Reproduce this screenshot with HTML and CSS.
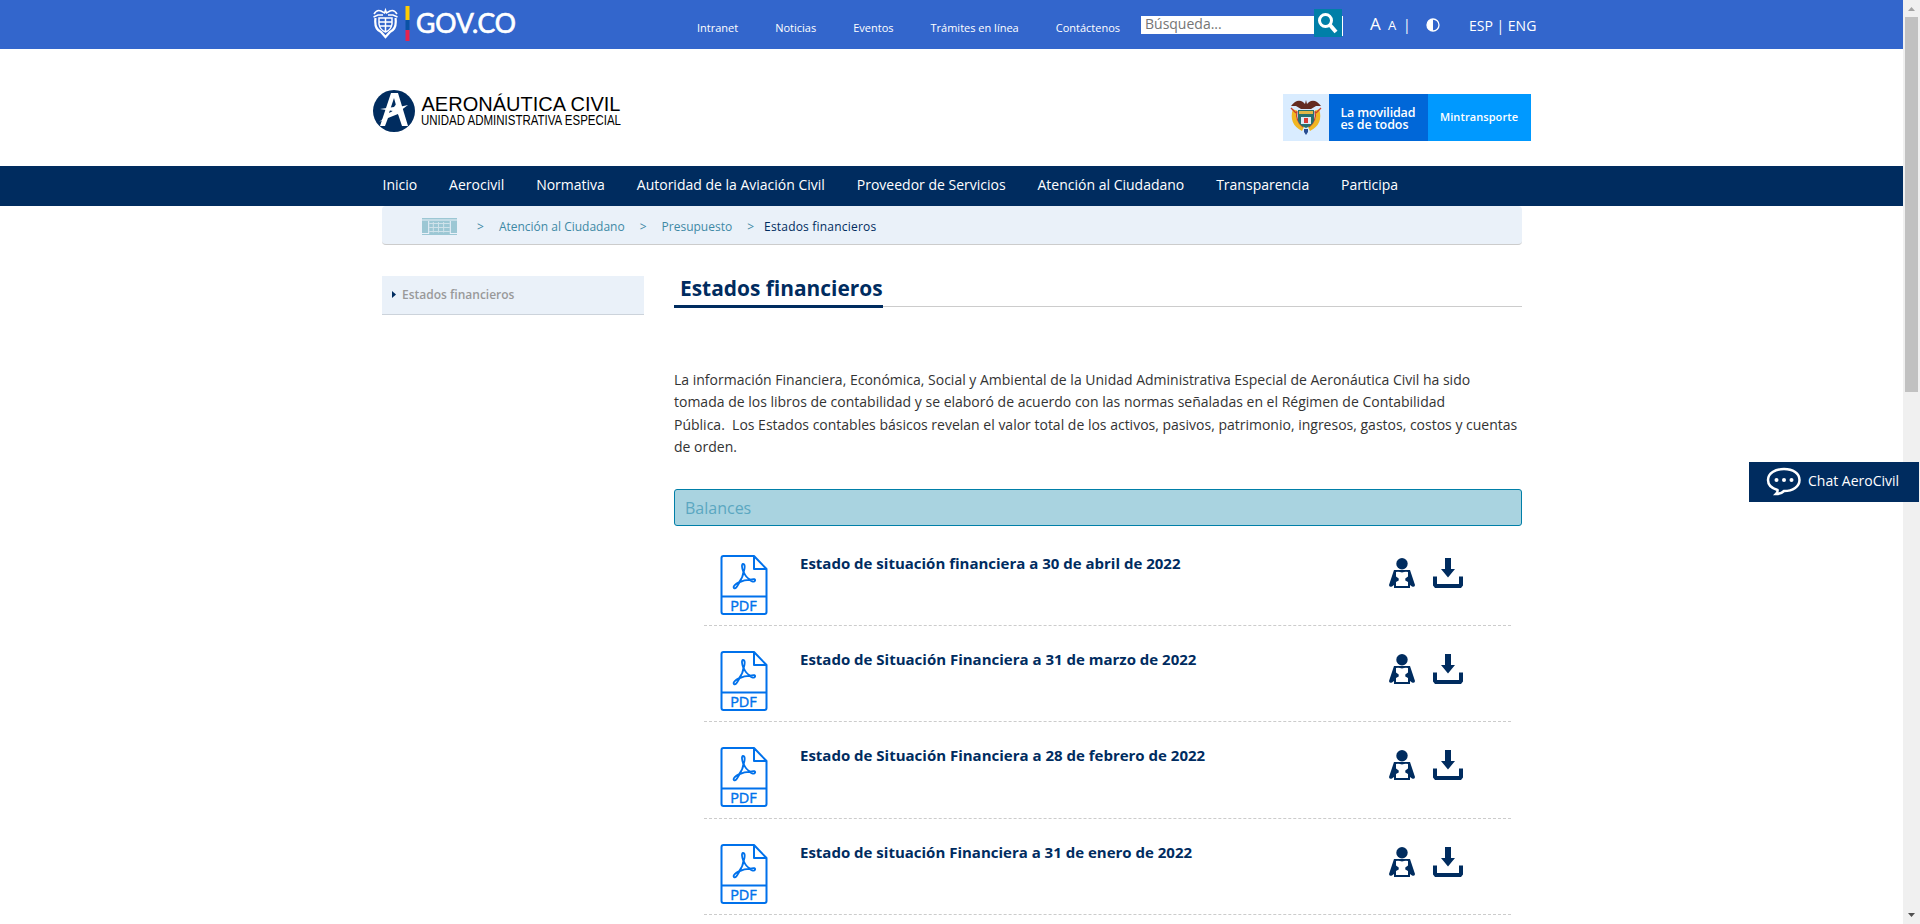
FILE: index.html
```html
<!DOCTYPE html>
<html lang="es">
<head>
<meta charset="utf-8">
<title>Estados financieros</title>
<link rel="stylesheet" href="styles.css">
</head>
<body>
<svg class="sprite" aria-hidden="true">
  <symbol id="pdf" viewBox="0 0 48 60">
    <g fill="none" stroke="#0071eb" stroke-width="2" stroke-linejoin="round">
      <path d="M3.500 1H34L46.500 14V57Q46.500 59 44.500 59H3.500Q1.500 59 1.500 57V3Q1.500 1 3.500 1ZM34 1V14H46.500M1.500 41.500H46.500"/>
      <path stroke-width="1.800" d="M23 9c2.500 0 1.800 4.500 0.700 8c1.500 3.800 4 6.500 6.500 7.600c4-1.200 5.500-.3 4.800 1.200c-1 1.800-3 .6-5.300-.9c-3.500 0-7.500 1-10 2.200c-2.500 4.400-4 7-5.700 6c-1.500-1.500 1.700-4.300 5.200-6c2.700-3.600 4-6.900 4.200-10c-1.600-4-2-8.100-.4-8.100Z"/>
    </g>
    <text x="23.500" y="55.500" text-anchor="middle" fill="#0071eb" stroke="#0071eb" stroke-width=".4" font-size="14.500" font-family="Open Sans, sans-serif">PDF</text>
  </symbol>
  <symbol id="reader" viewBox="0 0 26 30">
    <circle cx="13" cy="5.700" r="5.700"/>
    <path fill-rule="evenodd" d="M5 12H21L26 27Q26 29.500 23 28.500L21 27V30H5V27L3 28.500Q0 29.500 0 27ZM7 14V18.500L9.700 20.500V22.500L7 24V28H19V24L16.300 22.500V20.500L19 18.500V14Q16 13.500 13 14.500Q10 13.500 7 14Z"/>
  </symbol>
  <symbol id="download" viewBox="0 0 30 30">
    <path d="M12 0H18V11H22L15 19.500L8 11H12ZM0 18.500H4V26H26V18.500H30V27.500L28 30H2L0 27.500Z"/>
  </symbol>
</svg>
<div class="page">
<div class="topbar">
  <svg class="gov" width="144" height="36" viewBox="0 0 144 36">
    <g fill="none" stroke="#fff" stroke-width="1.500">
      <path d="M1 8Q4 3 8 5L11.500 7L12.500 4L13.500 7L17 5Q21 3 24 8M0.500 11L5 9L10 9M24.500 11L20 9L15 9"/>
      <path d="M6 12H19V18Q18 24 12.500 26Q7 24 6 18ZM6 16H19M7 20H18M12.500 12V26"/>
      <path d="M2.500 12Q1 23 8 26L12.500 31L17 26Q24 23 22.500 12" stroke-width="2.200"/>
    </g>
    <path fill="#ffcd00" d="M32.500 0h4v14h-4z"/><path fill="#0a52a5" d="M32.500 14h4v10h-4z"/><path fill="#e6224d" d="M32.500 24h4v11h-4z"/>
    <text x="43" y="27" textLength="100" lengthAdjust="spacingAndGlyphs" fill="#fff" stroke="#fff" stroke-width=".7" font-family="Lato" font-size="26">GOV.CO</text>
  </svg>
  <nav class="toplinks"><a>Intranet</a><a>Noticias</a><a>Eventos</a><a>Trámites en línea</a><a>Contáctenos</a></nav>
  <div class="search"><div class="field">Búsqueda...</div><div class="glass"><svg width="28" height="28" viewBox="0 0 28 28" fill="none" stroke="#fff"><circle cx="11.500" cy="11.500" r="6" stroke-width="3"/><path d="M16 16L22 23" stroke-width="4"/></svg></div><i></i></div>
  <div class="sizes"><span class="big">A</span><span class="small">A</span><span class="bar">|</span></div>
  <svg class="contrast" width="14" height="14" viewBox="0 0 14 14"><circle cx="7" cy="7" r="6" fill="none" stroke="#fff" stroke-width="1.300"/><path fill="#fff" d="M7 1A6 6 0 0 0 7 13Z"/></svg>
  <div class="langs">ESP | ENG</div>
</div>
<header class="brand">
  <svg width="260" height="60" viewBox="0 0 260 60">
    <circle cx="21" cy="31" r="21" fill="#002c5f"/>
    <path fill="#fff" d="M18 13H25L35 46H29L25 34L15 38L12 46H7ZM21 18L16 33L24 29Z"/>
    <path fill="#fff" d="M7 29L21 27L24 23L26 27L35 25L27 31L28 36L23 33L6 42L20 31Z"/>
    <text x="48.500" y="31" textLength="199" lengthAdjust="spacingAndGlyphs" font-family="Liberation Sans" font-size="20.500">AERONÁUTICA CIVIL</text>
    <text x="48" y="45" textLength="200" lengthAdjust="spacingAndGlyphs" font-family="Liberation Sans" font-size="14">UNIDAD ADMINISTRATIVA ESPECIAL</text>
  </svg>
  <svg class="ministry" width="248" height="47" viewBox="0 0 248 47">
    <path fill="#d9ecff" d="M0 0h46v47H0z"/><path fill="#0067d8" d="M46 0h100v47H46z"/><path fill="#0099ff" d="M145 0h103v47H145z"/>
    <path fill="none" stroke="#f0b622" stroke-width="4.500" d="M12 16Q8 29 20 35M34 16Q38 29 26 35"/>
    <path fill="#642b20" d="M8 12Q14 4 20 8L22 10L23 6L24 10L26 8Q32 4 38 12L33 12L28 15H18L13 12Z"/>
    <path fill="none" stroke="#c9402b" stroke-width="1.300" d="M14 17Q12 27 20 33M26 33Q34 27 32 17M8 14L13 19M38 14L33 19"/>
    <path fill="#27706e" d="M15 16H31V27Q29 32 23 34Q17 32 15 27Z"/><path fill="#e0b746" d="M16 17h14v3H16z"/><path fill="#dceaf5" d="M18 23h10v7H18z"/><path fill="#d83a34" d="M21 24h4v5h-4z"/><path fill="#294d91" d="M21 35h4v3l-2 3-2-3z"/>
    <g fill="#fff" font-family="Open Sans" font-weight="600"><text x="57.500" y="23" textLength="75" font-size="12.500">La movilidad</text><text x="57.500" y="35" textLength="68" font-size="12.500">es de todos</text><text x="157" y="27" textLength="78" font-size="11">Mintransporte</text></g>
  </svg>
</header>
<nav class="menu"><a>Inicio</a><a>Aerocivil</a><a>Normativa</a><a>Autoridad de la Aviación Civil</a><a>Proveedor de Servicios</a><a>Atención al Ciudadano</a><a>Transparencia</a><a>Participa</a></nav>
<div class="crumbs">
  <svg width="35" height="17" viewBox="0 0 34 17" preserveAspectRatio="none"><path fill="#9cc7d4" d="M0 0h34v1.500H0zM0 2.500h34V17H0z"/><path fill="none" stroke="#eaf1f9" d="M6.500 3V15.500H0M27.500 3V15.500H34"/><path fill="none" stroke="#cfe2ea" d="M7 5.500H27M7 9.500H27M7 13.500H27M11 4V14.500M16 4V14.500M21 4V14.500"/></svg>
  <span class="sep s1">&gt;</span><a>Atención al Ciudadano</a><span class="sep s2">&gt;</span><a>Presupuesto</a><span class="sep s3">&gt;</span><b>Estados financieros</b>
</div>
<div class="columns">
  <aside><svg width="5" height="7" viewBox="0 0 5 7"><path fill="#002c5f" d="M0 0L4 3.500L0 7Z"/></svg>Estados financieros</aside>
  <main>
    <div class="heading"><h1>Estados financieros</h1></div>
    <p class="intro">La información Financiera, Económica, Social y Ambiental de la Unidad Administrativa Especial de Aeronáutica Civil ha sido<br>tomada de los libros de contabilidad y se elaboró de acuerdo con las normas señaladas en el Régimen de Contabilidad<br>Pública.&nbsp; Los Estados contables básicos revelan el valor total de los activos, pasivos, patrimonio, ingresos, gastos, costos y cuentas<br>de orden.</p>
    <h2>Balances</h2>
    <ul class="files">
      <li><svg class="pdf"><use href="#pdf"/></svg><h3>Estado de situación financiera a 30 de abril de 2022</h3><svg class="reader"><use href="#reader"/></svg><svg class="download"><use href="#download"/></svg></li>
      <li><svg class="pdf"><use href="#pdf"/></svg><h3>Estado de Situación Financiera a 31 de marzo de 2022</h3><svg class="reader"><use href="#reader"/></svg><svg class="download"><use href="#download"/></svg></li>
      <li><svg class="pdf"><use href="#pdf"/></svg><h3>Estado de Situación Financiera a 28 de febrero de 2022</h3><svg class="reader"><use href="#reader"/></svg><svg class="download"><use href="#download"/></svg></li>
      <li><svg class="pdf"><use href="#pdf"/></svg><h3>Estado de situación Financiera a 31 de enero de 2022</h3><svg class="reader"><use href="#reader"/></svg><svg class="download"><use href="#download"/></svg></li>
    </ul>
  </main>
</div>
</div>
<div class="scrollbar"><svg width="17" height="17"><path fill="#a3a3a3" d="M5 11h7L8.500 7z"/></svg><div class="thumb"></div><svg width="17" height="17"><path fill="#505050" d="M5 6h7L8.500 10z"/></svg></div>
<div class="chat"><svg width="36" height="30" viewBox="0 0 36 30"><path d="M18 2C27 2 33.500 6.500 33.500 13S27 24 18 24Q15 27 10 27Q12 25 11.500 23C6 21.500 2 18 2 13C2 6.500 9 2 18 2Z" fill="none" stroke="#fff" stroke-width="2.500"/><g fill="#fff"><circle cx="10.500" cy="13" r="2"/><circle cx="18" cy="13" r="2"/><circle cx="25.500" cy="13" r="2"/></g></svg><span>Chat AeroCivil</span></div>
</body>
</html>
```
FILE: styles.css
```css
* { box-sizing: border-box; }
body { margin: 0; height: 924px; overflow: hidden; display: flex; background: #fff; font-family: "Open Sans", sans-serif; position: relative; }
.sprite { display: none; }
svg { display: block; flex: none; }
.page { width: 1903px; flex: none; height: 924px; overflow: hidden; }
.topbar { height: 49px; background: #36c; color: #fff; display: flex; align-items: flex-start; padding-left: 373px; }
.gov { margin-top: 6px; }
.toplinks { display: flex; width: 444px; margin: 20px 0 0 180px; font-size: 11px; line-height: 16px; gap: 37px; white-space: nowrap; }
.search { display: flex; align-items: flex-start; width: 202px; margin-top: 9px; }
.field { background: #fff; width: 173px; height: 18px; margin-top: 7px; padding-left: 4px; font-size: 14px; line-height: 16px; color: #757575; }
.glass { width: 28px; height: 28px; background: #007fa8; }
.search i { width: 1px; height: 20px; margin-top: 7px; background: #fff; }
.sizes { display: flex; align-items: baseline; width: 56px; margin: 13px 0 0 27px; line-height: 22px; white-space: nowrap; }
.big { font-size: 17px; width: 18px; }
.small { font-size: 13px; width: 15px; }
.bar { font-size: 14px; }
.contrast { margin-top: 18px; }
.langs { margin: 15px 0 0 29px; font-size: 14px; line-height: 22px; white-space: nowrap; }
.brand { height: 117px; display: flex; align-items: flex-start; justify-content: space-between; padding: 31px 372px 0 373px; }
.ministry { margin-top: 14px; }
.menu { height: 40px; background: #002c5f; color: #fff; display: flex; gap: 31.900px; padding-left: 382.500px; font-size: 14px; line-height: 38px; white-space: nowrap; }
.crumbs { margin-left: 382px; width: 1140px; height: 39px; background: #eaf1f9; border-bottom: 1px solid #ccc; border-radius: 4px; display: flex; align-items: center; padding: 2px 0 0 40px; font-size: 12px; color: #3e89a5; white-space: nowrap; }
.crumbs b { color: #002c5f; font-weight: 500; letter-spacing: .2px; }
.s1 { margin: 0 15px 0 20px; }
.s2, .s3 { margin: 0 15px; }
.s3 { margin-right: 10px; }
.columns { display: flex; gap: 30px; margin: 31px 0 0 382px; }
aside { width: 262px; height: 39px; background: #eaf1f9; border-bottom: 1px solid #ccd3db; display: flex; align-items: center; gap: 5px; padding: 0 0 2px 10px; font-size: 12px; font-weight: 600; color: #999; }
main { width: 848px; }
.heading { height: 32px; display: flex; align-items: flex-start; background: linear-gradient(#ccc, #ccc) 0 30px / 100% 1px no-repeat; }
h1 { margin: 0; height: 32px; border-bottom: 3px solid #002c5f; padding-left: 6px; font-size: 20.900px; line-height: 25px; font-weight: 700; color: #002c5f; white-space: nowrap; }
.intro { margin: 61px 0 0; font-size: 14px; line-height: 22.400px; color: #333; white-space: nowrap; }
h2 { margin: 30px 0 0; height: 37px; border: 1px solid #007fa8; border-radius: 3px; background: #a9d3e0; padding-left: 10px; font-size: 16px; line-height: 36px; font-weight: 400; color: #5ba7c1; }
.files { list-style: none; margin: 4px 11px 0 30px; padding: 0; }
.files li { height: 96.300px; border-bottom: 1px dashed #ccc; display: flex; align-items: flex-start; padding: 25px 0 0 16px; }
.pdf { width: 48px; height: 60px; }
h3 { margin: 0 0 0 32px; width: 589px; font-size: 15px; line-height: 16px; font-weight: 700; color: #002c5f; white-space: nowrap; }
.reader { width: 26px; height: 30px; margin: 3px 18px 0 0; fill: #002c5f; }
.download { width: 30px; height: 30px; margin-top: 3px; fill: #002c5f; }
.scrollbar { width: 17px; height: 924px; background: #f0f0f0; display: flex; flex-direction: column; align-items: center; }
.thumb { width: 13px; height: 375px; background: #c1c1c1; margin-bottom: auto; }
.chat { position: absolute; left: 1749px; top: 462px; width: 170px; height: 40px; background: #002c5f; color: #fff; display: flex; align-items: center; gap: 6px; padding-left: 17px; font-size: 14px; white-space: nowrap; }
.chat span { padding-bottom: 3px; }
```
